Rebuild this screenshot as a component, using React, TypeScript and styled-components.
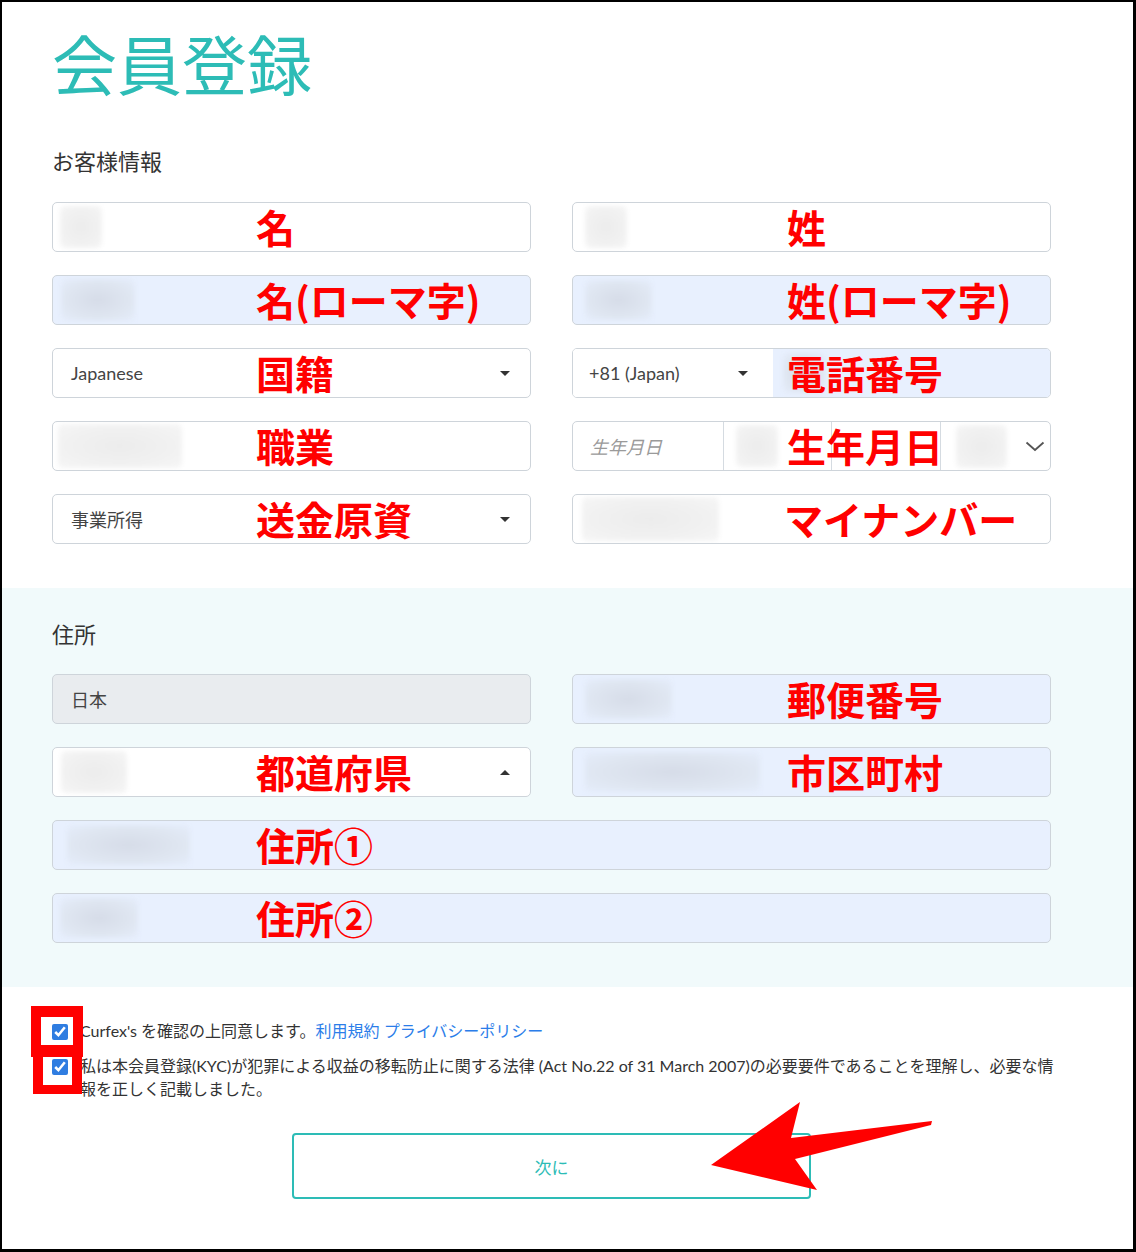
import React from 'react';
import styled, { createGlobalStyle } from 'styled-components';

const GlobalStyle = createGlobalStyle`
  html, body { margin: 0; padding: 0; background: #fff; }
  body { font-family: Lato, "Noto Sans CJK JP", sans-serif; color: #333; }
  * { box-sizing: border-box; }
`;

type Tone = 'plain' | 'filled' | 'disabled';

const toneBg: Record<Tone, string> = {
  plain: '#fff',
  filled: '#e8f0fe',
  disabled: '#e9ecef',
};

const Frame = styled.div`
  position: relative;
  width: 1136px;
  height: 1252px;
  border: 2px solid #000;
  border-right-width: 3px;
  border-bottom-width: 3px;
  background: #fff;
  overflow: hidden;
`;

const Section = styled.section<{ $tint?: boolean; $top: number }>`
  padding: ${(p) => p.$top}px 0 44px 50px;
  background: ${(p) => (p.$tint ? '#f1fafb' : '#fff')};
`;

const Title = styled.h1`
  margin: 0;
  font: 400 65px/65px "Noto Sans CJK JP", sans-serif;
  color: #2dbcb6;
`;

const GroupLabel = styled.h2<{ $gap?: number }>`
  margin: ${(p) => p.$gap ?? 0}px 0 0;
  font: 400 22px/30px "Noto Sans CJK JP", sans-serif;
  color: #333;
`;

const Grid = styled.div<{ $gap: number }>`
  display: grid;
  grid-template-columns: 479px 479px;
  column-gap: 41px;
  row-gap: 23px;
  margin-top: ${(p) => p.$gap}px;
`;

const Field = styled.div<{ $tone?: Tone; $wide?: boolean; $flush?: boolean }>`
  position: relative;
  display: flex;
  align-items: center;
  height: 50px;
  padding: ${(p) => (p.$flush ? '0' : '0 20px 0 18px')};
  border: 1px solid #ced4da;
  border-radius: 5px;
  background: ${(p) => toneBg[p.$tone ?? 'plain']};
  grid-column: ${(p) => (p.$wide ? '1 / -1' : 'auto')};
  font-size: 18px;
  color: #444;
  overflow: hidden;
`;

const Blur = styled.div<{ $w: number; $h: number; $x: number; $blue?: boolean }>`
  flex: none;
  width: ${(p) => p.$w}px;
  height: ${(p) => p.$h}px;
  margin-left: ${(p) => p.$x}px;
  border-radius: 5px;
  background: ${(p) =>
    p.$blue
      ? 'radial-gradient(ellipse at center, #d6dce8 0%, #dfe6f1 60%, #e5edfb 100%)'
      : 'radial-gradient(ellipse at center, #ececec 0%, #f1f1f1 60%, #f6f6f6 100%)'};
  filter: blur(2px);
`;

const Note = styled.span<{ $x: number }>`
  position: absolute;
  top: -2px;
  bottom: 0;
  left: ${(p) => p.$x}px;
  display: flex;
  align-items: center;
  font: 700 39px/1 "Noto Sans CJK JP", sans-serif;
  color: #ff0000;
  white-space: nowrap;
  pointer-events: none;
`;

const Caret = styled.span<{ $up?: boolean }>`
  flex: none;
  margin-left: auto;
  width: 0;
  height: 0;
  border-left: 5px solid transparent;
  border-right: 5px solid transparent;
  ${(p) => (p.$up ? 'border-bottom: 5px solid #333;' : 'border-top: 5px solid #333;')}
`;

const Value = styled.span`
  white-space: nowrap;
`;

const PhoneCode = styled.div`
  display: flex;
  align-items: center;
  width: 200px;
  height: 100%;
  padding: 0 25px 0 16px;
  background: #fff;
`;

const PhoneNumber = styled.div`
  display: flex;
  align-items: center;
  flex: 1;
  height: 100%;
  background: #e8f0fe;
`;

const DateCell = styled.div<{ $w?: number }>`
  display: flex;
  align-items: center;
  height: 100%;
  ${(p) => (p.$w ? `width: ${p.$w}px; flex: none;` : 'flex: 1;')}
  & + & { border-left: 1px solid #d5dbe1; }
`;

const Placeholder = styled.span`
  padding-left: 17px;
  font-style: italic;
  color: #9a9a9a;
`;

const Chevron = styled.svg`
  margin-left: auto;
  margin-right: 5px;
`;

const Footer = styled.div`
  position: relative;
  height: 263px;
  padding: 32px 76px 0 50px;
`;

const Agree = styled.label`
  display: flex;
  align-items: flex-start;
  gap: 12px;
  font-size: 16px;
  line-height: 23px;
  color: #333;
  & + & { margin-top: 12px; }
`;

const Check = styled.input.attrs({ type: 'checkbox' })`
  flex: none;
  width: 16px;
  height: 16px;
  margin: 5px 0 0;
  accent-color: #2f7de1;
`;

const Link = styled.a`
  color: #2b7de9;
  text-decoration: none;
`;

const NextButton = styled.button`
  display: block;
  width: 519px;
  height: 66px;
  margin: 33px 0 0 240px;
  border: 2px solid #2dbcb6;
  border-radius: 4px;
  background: #fff;
  color: #2dbcb6;
  font: 400 17px Lato, "Noto Sans CJK JP", sans-serif;
`;

const RedBox = styled.div<{ $x: number; $y: number; $w: number; $h: number; $t: number; $b: number }>`
  position: absolute;
  left: ${(p) => p.$x}px;
  top: ${(p) => p.$y}px;
  width: ${(p) => p.$w}px;
  height: ${(p) => p.$h}px;
  border: 10px solid #ff0000;
  border-top-width: ${(p) => p.$t}px;
  border-bottom-width: ${(p) => p.$b}px;
  pointer-events: none;
`;

const Arrow = styled.svg`
  position: absolute;
  left: 0;
  top: 0;
  pointer-events: none;
`;

const L = 203;
const R = 214;

export default function App() {
  return (
    <>
      <GlobalStyle />
      <Frame>
        <Section $top={28}>
          <Title>会員登録</Title>
          <GroupLabel $gap={50}>お客様情報</GroupLabel>
          <Grid $gap={27}>
            <Field>
              <Blur $x={-11} $w={42} $h={42} />
              <Note $x={L}>名</Note>
            </Field>
            <Field>
              <Blur $x={-6} $w={42} $h={42} />
              <Note $x={R}>姓</Note>
            </Field>
            <Field $tone="filled">
              <Blur $blue $x={-10} $w={74} $h={42} />
              <Note $x={L}>名(ローマ字)</Note>
            </Field>
            <Field $tone="filled">
              <Blur $blue $x={-6} $w={67} $h={40} />
              <Note $x={R}>姓(ローマ字)</Note>
            </Field>
            <Field>
              <Value>Japanese</Value>
              <Caret />
              <Note $x={L}>国籍</Note>
            </Field>
            <Field $flush>
              <PhoneCode>
                <Value>+81 (Japan)</Value>
                <Caret />
              </PhoneCode>
              <PhoneNumber>
                <Blur $blue $x={10} $w={42} $h={40} />
              </PhoneNumber>
              <Note $x={R}>電話番号</Note>
            </Field>
            <Field>
              <Blur $x={-13} $w={124} $h={44} />
              <Note $x={L}>職業</Note>
            </Field>
            <Field $flush>
              <DateCell $w={150}>
                <Placeholder>生年月日</Placeholder>
              </DateCell>
              <DateCell $w={108}>
                <Blur $x={12} $w={42} $h={42} />
              </DateCell>
              <DateCell $w={109} />
              <DateCell>
                <Blur $x={15} $w={51} $h={43} />
                <Chevron width="20" height="11" viewBox="0 0 20 11">
                  <polyline points="1.5,1.5 10,9 18.5,1.5" fill="none" stroke="#555" strokeWidth="1.8" />
                </Chevron>
              </DateCell>
              <Note $x={R}>生年月日</Note>
            </Field>
            <Field>
              <Value>事業所得</Value>
              <Caret />
              <Note $x={L}>送金原資</Note>
            </Field>
            <Field>
              <Blur $x={-9} $w={137} $h={44} />
              <Note $x={R - 3}>マイナンバー</Note>
            </Field>
          </Grid>
        </Section>

        <Section $tint $top={30}>
          <GroupLabel>住所</GroupLabel>
          <Grid $gap={26}>
            <Field $tone="disabled">
              <Value>日本</Value>
            </Field>
            <Field $tone="filled">
              <Blur $blue $x={-6} $w={87} $h={40} />
              <Note $x={R}>郵便番号</Note>
            </Field>
            <Field>
              <Blur $x={-10} $w={66} $h={42} />
              <Caret $up />
              <Note $x={L}>都道府県</Note>
            </Field>
            <Field $tone="filled">
              <Blur $blue $x={-6} $w={175} $h={40} />
              <Note $x={R}>市区町村</Note>
            </Field>
            <Field $tone="filled" $wide>
              <Blur $blue $x={-4} $w={123} $h={40} />
              <Note $x={L}>住所①</Note>
            </Field>
            <Field $tone="filled" $wide>
              <Blur $blue $x={-11} $w={78} $h={40} />
              <Note $x={L}>住所②</Note>
            </Field>
          </Grid>
        </Section>

        <Footer>
          <Agree>
            <Check defaultChecked />
            <span>
              Curfex's を確認の上同意します。<Link href="#">利用規約</Link> <Link href="#">プライバシーポリシー</Link>
            </span>
          </Agree>
          <Agree>
            <Check defaultChecked />
            <span>
              私は本会員登録(KYC)が犯罪による収益の移転防止に関する法律 (Act No.22 of 31 March 2007)の必要要件であることを理解し、必要な情報を正しく記載しました。
            </span>
          </Agree>
          <NextButton type="button">次に</NextButton>

          <RedBox $x={29} $y={19} $w={52} $h={51} $t={11} $b={12} />
          <RedBox $x={31} $y={67} $w={49} $h={40} $t={3} $b={9} />

          <Arrow width="1131" height="263" viewBox="0 0 1131 263">
            <polygon
              points="709,178 798,115 789,151 930,134 929,138 793,172 815,203"
              fill="#ff0000"
            />
          </Arrow>
        </Footer>
      </Frame>
    </>
  );
}
